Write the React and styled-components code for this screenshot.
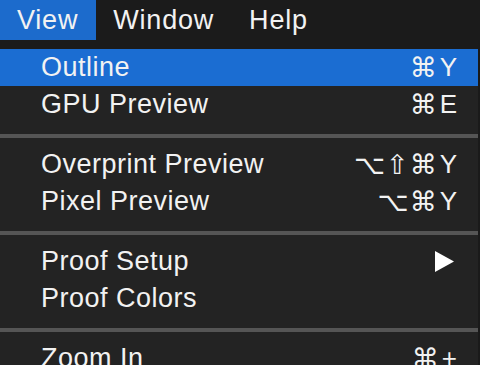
import React from 'react';
import styled, { createGlobalStyle } from 'styled-components';

const GlobalStyle = createGlobalStyle`
  html, body {
    margin: 0;
    padding: 0;
    width: 480px;
    height: 365px;
    overflow: hidden;
    background: #222222;
  }
`;

const Screen = styled.div`
  width: 480px;
  height: 365px;
  overflow: hidden;
  background: #222222;
  font-family: "Liberation Sans", "DejaVu Sans", sans-serif;
  color: #f2f2f2;
`;

const MenuBar = styled.div`
  display: flex;
  height: 40px;
  background: #1b1b1b;
`;

const BarItem = styled.div`
  display: flex;
  align-items: center;
  padding: 0 18px 0 17px;
  font-size: 27px;
  letter-spacing: 0.8px;
  background: ${(p) => (p.active ? '#1c6bcc' : 'transparent')};
`;

const Dropdown = styled.div`
  display: flex;
  flex-direction: column;
  padding-top: 9px;
  background: linear-gradient(#1b1b1b 0, #1b1b1b 9px, #232323 9px);
  border-right: 2px solid #1a1a1a;
`;

const Item = styled.div`
  display: flex;
  align-items: center;
  justify-content: space-between;
  height: 37px;
  padding: 0 21px 0 41px;
  font-size: 27px;
  letter-spacing: 0.5px;
  background: ${(p) => (p.selected ? '#1b6dd2' : 'transparent')};
`;

const Shortcut = styled.span`
  display: flex;
  align-items: center;
  font-family: "Liberation Sans", "DejaVu Sans", sans-serif;
  font-size: 26px;
  letter-spacing: 2px;
  margin-right: -2px;
`;

const Sym = styled.span`
  font-family: "DejaVu Sans", sans-serif;
  font-size: 27px;
  letter-spacing: 1px;
  margin-right: 2px;
`;

const Separator = styled.div`
  height: 4px;
  margin: 11px 0 8px;
  background: #555555;
`;

const Arrow = styled.svg`
  width: 21px;
  height: 21px;
  margin-right: 2px;
`;

function Keys({ mods = '', keyName }) {
  return (
    <Shortcut>
      <Sym>{mods}</Sym>
      {keyName}
    </Shortcut>
  );
}

export default function App() {
  return (
    <Screen>
      <GlobalStyle />
      <MenuBar>
        <BarItem active>View</BarItem>
        <BarItem>Window</BarItem>
        <BarItem>Help</BarItem>
      </MenuBar>
      <Dropdown>
        <Item selected>
          Outline
          <Keys mods="⌘" keyName="Y" />
        </Item>
        <Item>
          GPU Preview
          <Keys mods="⌘" keyName="E" />
        </Item>
        <Separator />
        <Item>
          Overprint Preview
          <Keys mods="⌥⇧⌘" keyName="Y" />
        </Item>
        <Item>
          Pixel Preview
          <Keys mods="⌥⌘" keyName="Y" />
        </Item>
        <Separator />
        <Item>
          Proof Setup
          <Arrow viewBox="0 0 21 21">
            <polygon points="1,0 20,10.5 1,21" fill="#ffffff" />
          </Arrow>
        </Item>
        <Item>Proof Colors</Item>
        <Separator />
        <Item>
          Zoom In
          <Keys mods="⌘" keyName="+" />
        </Item>
      </Dropdown>
    </Screen>
  );
}
